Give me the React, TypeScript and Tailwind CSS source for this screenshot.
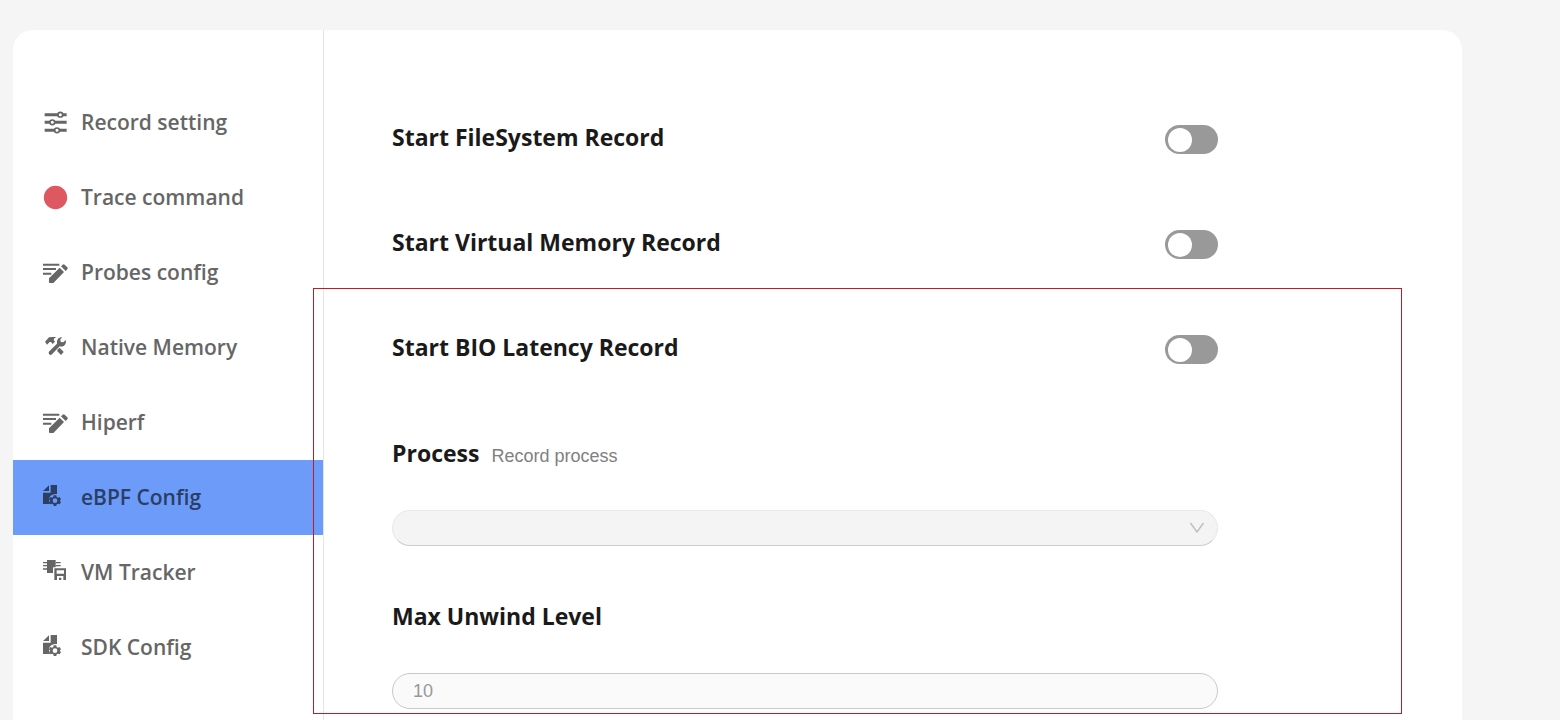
import React, { useState } from "react";

const SlidersIcon = () => (
  <>
    <path d="M44 44H110M44 67H110M44 91H110" stroke="currentColor" strokeWidth="9" />
    <g fill="#fff" stroke="currentColor" strokeWidth="5">
      <circle cx="91" cy="44" r="7" />
      <circle cx="67" cy="67" r="7" />
      <circle cx="81" cy="91" r="7" />
    </g>
  </>
);

const RecordDot = () => <circle cx="76.5" cy="67.5" r="35" fill="#dd5860" />;

const PencilIcon = () => (
  <>
    <path d="M39 44H88M39 57H78M39 71H64" stroke="currentColor" strokeWidth="6" />
    <path
      d="M57 97V85L89 53L102 66L71 98Q70 99 68 99H59Q57 99 57 97ZM93 49L98 44Q101 41 104 44L112 52Q115 55 112 58L107 63Z"
      fill="currentColor"
    />
  </>
);

const ToolsIcon = () => (
  <>
    <path
      d="M45 50L57 37Q60 35 79 36L73 40L71 45L75 50L68 57L63 51L59 51L51 59Z"
      fill="currentColor"
    />
    <path d="M82 74L89 68L101 81L93 90L82 79Z" fill="currentColor" />
    <path
      d="M97 36L91 43L92 51L100 52L107 45Q110 56 102 62Q96 66 89 64L66 88Q61 92 57 87Q54 83 58 79L81 56Q79 48 84 41Q89 36 97 36Z"
      fill="currentColor"
    />
  </>
);

const FileGearIcon = () => (
  <>
    <path d="M39 48L57 31V48ZM62 30H81V57Q63 56 58 68Q55 80 60 87H39V53H62Z" fill="currentColor" />
    <path
      fillRule="evenodd"
      d="M71 61H79L80 66L84 68L89 66L93 73L89 77L93 81L89 88L84 86L80 88L79 93H71L70 88L66 86L61 88L57 81L61 77L57 73L61 66L66 68L70 66ZM75 70A7 7 0 1 0 75 84A7 7 0 1 0 75 70Z"
      fill="currentColor"
    />
  </>
);

const ChipDiskIcon = () => (
  <>
    <path d="M51 30H77V52H69V69H51Z" fill="currentColor" />
    <path d="M39 38H52M39 47H52M39 57H52M77 38H92M77 47H92" stroke="currentColor" strokeWidth="4" />
    <path
      fillRule="evenodd"
      d="M73 55H108V90H73ZM80 61V71H102V61ZM81 78V90H87V83H94V90H100V78Z"
      fill="currentColor"
    />
    <path d="M88 85H93V90H88Z" fill="currentColor" />
  </>
);

const menu = [
  { label: "Record setting", Icon: SlidersIcon },
  { label: "Trace command", Icon: RecordDot },
  { label: "Probes config", Icon: PencilIcon },
  { label: "Native Memory", Icon: ToolsIcon },
  { label: "Hiperf", Icon: PencilIcon },
  { label: "eBPF Config", Icon: FileGearIcon },
  { label: "VM Tracker", Icon: ChipDiskIcon },
  { label: "SDK Config", Icon: FileGearIcon },
];

function SwitchRow({ id, label }: { id: string; label: string }) {
  return (
    <div className="flex h-[105px] items-center justify-between">
      <label htmlFor={id} className="pb-1.5 text-[23px] leading-9 font-bold">
        {label}
      </label>
      <input
        id={id}
        type="checkbox"
        role="switch"
        className="flex h-[29px] w-[53px] cursor-pointer appearance-none items-center rounded-full bg-[#999] px-[3px] before:size-6 before:rounded-full before:bg-white checked:justify-end checked:bg-[#6c9bfa]"
      />
    </div>
  );
}

export default function App() {
  const [active, setActive] = useState("eBPF Config");
  return (
    <div className="flex min-h-screen bg-[#f5f5f5] pt-[30px] pr-[98px] pl-[13px] font-['Open_Sans','Noto_Sans',sans-serif] text-[#1a1a1a]">
      <div className="flex flex-1 rounded-t-[20px] bg-white">
        <nav className="w-[311px] shrink-0 border-r border-[#e5e5e5] pt-[55px]">
          {menu.map(({ label, Icon }) => (
            <button
              key={label}
              type="button"
              onClick={() => setActive(label)}
              className={
                active === label
                  ? "flex h-[75px] w-full cursor-pointer items-center gap-[11px] bg-[#6c9bfa] pl-[29px] text-[21px] font-semibold text-[#2b3e64]"
                  : "flex h-[75px] w-full cursor-pointer items-center gap-[11px] pl-[29px] text-[21px] font-semibold text-[#666]"
              }
            >
              <svg viewBox="36 27 84 81" className="h-[27px] w-7 shrink-0" fill="none" aria-hidden="true">
                <Icon />
              </svg>
              {label}
            </button>
          ))}
        </nav>
        <main className="min-w-0 flex-1 pt-[57px] pr-[244px] pl-[68px]">
          <SwitchRow id="filesystem" label="Start FileSystem Record" />
          <SwitchRow id="virtual-memory" label="Start Virtual Memory Record" />
          <section className="relative">
            <SwitchRow id="bio-latency" label="Start BIO Latency Record" />
            <div className="pt-[33px]">
              <div className="flex h-9 items-baseline gap-3">
                <label htmlFor="process" className="text-[23px] leading-9 font-bold">
                  Process
                </label>
                <span className="font-['Liberation_Sans',sans-serif] text-lg text-[#808080]">Record process</span>
              </div>
              <div className="relative mt-[39px]">
                <select
                  id="process"
                  disabled
                  className="block h-9 w-full appearance-none rounded-full border border-[#e8e8e8] border-b-[#ccc] bg-[#f4f4f4] px-5 opacity-100"
                />
                <svg
                  viewBox="0 0 16 12"
                  className="pointer-events-none absolute top-3 right-[13px] h-3 w-4"
                  fill="none"
                  stroke="#bfbfbf"
                  strokeWidth="1.500"
                  aria-hidden="true"
                >
                  <path d="M1.500 1L8 10L14.500 1" />
                </svg>
              </div>
            </div>
            <div className="pt-[52px]">
              <label htmlFor="unwind" className="block h-9 text-[23px] leading-9 font-bold">
                Max Unwind Level
              </label>
              <input
                id="unwind"
                type="text"
                placeholder="10"
                className="mt-[39px] block h-9 w-full rounded-full border border-[#c8c8c8] bg-[#fafafa] px-5 font-['Liberation_Sans',sans-serif] text-lg placeholder:text-[#999]"
              />
            </div>
            <div className="pointer-events-none absolute -top-[9px] -right-[184px] -bottom-[5px] -left-[79px] border border-[#c01c28]" />
          </section>
        </main>
      </div>
    </div>
  );
}
